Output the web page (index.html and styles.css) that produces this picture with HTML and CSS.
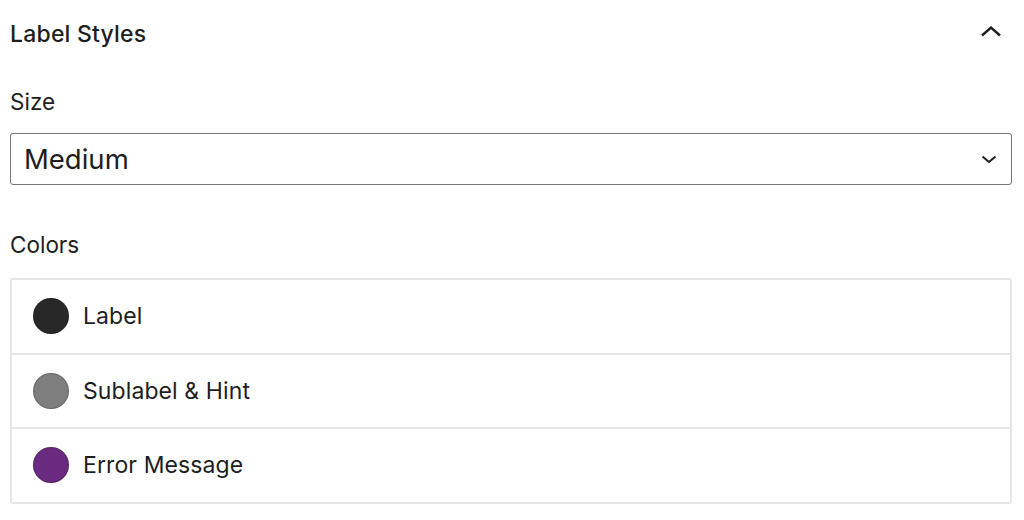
FILE: index.html
```html
<!DOCTYPE html>
<html>
<head>
<meta charset="utf-8">
<link rel="stylesheet" href="styles.css">
</head>
<body>
<div class="panel">
  <div class="panel-header">
    <h2 class="panel-title">Label Styles</h2>
    <svg class="toggle-icon" width="24" height="24" viewBox="0 0 24 24"><path d="M3 16.5 L12 8.5 L21 16.5" fill="none" stroke="#1e1e1e" stroke-width="2.4"/></svg>
  </div>
  <div class="field">
    <label class="field-label">Size</label>
    <div class="select">
      <span class="select-value">Medium</span>
      <svg class="select-arrow" width="18" height="12" viewBox="0 0 18 12"><path d="M2.5 3.5 L9 9 L15.5 3.5" fill="none" stroke="#1e1e1e" stroke-width="2"/></svg>
    </div>
  </div>
  <div class="field colors">
    <div class="field-label">Colors</div>
    <ul class="color-list">
      <li class="color-row"><span class="swatch swatch-label"></span><span class="color-name">Label</span></li>
      <li class="color-row"><span class="swatch swatch-sub"></span><span class="color-name">Sublabel &amp; Hint</span></li>
      <li class="color-row"><span class="swatch swatch-error"></span><span class="color-name">Error Message</span></li>
    </ul>
  </div>
</div>
</body>
</html>
```

FILE: styles.css
```css
html, body {
  margin: 0;
  padding: 0;
  background: #ffffff;
}
body {
  font-family: Inter, "Liberation Sans", sans-serif;
  color: #1e1e1e;
}
.panel {
  width: 1002px;
  margin-left: 10px;
}
.panel-header {
  display: flex;
  align-items: center;
  justify-content: space-between;
  height: 66px;
}
.panel-title {
  margin: 0;
  font-size: 23px;
  font-weight: 500;
  letter-spacing: 0.2px;
  line-height: 1;
  padding-top: 2px;
}
.toggle-icon {
  margin-right: 9px;
  margin-top: -4px;
}
.field {
  display: flex;
  flex-direction: column;
}
.field-label {
  font-size: 22.5px;
  line-height: 26px;
  margin-top: 23px;
  margin-bottom: 18px;
}
.select {
  height: 52px;
  box-sizing: border-box;
  border: 1.5px solid #767676;
  border-radius: 3px;
  display: flex;
  align-items: center;
  justify-content: space-between;
  padding: 0 13px 0 13px;
}
.select-value {
  font-size: 27.5px;
}
.colors .field-label {
  margin-top: 47px;
  margin-bottom: 20px;
}
.color-list {
  list-style: none;
  margin: 0;
  padding: 0;
  border: 2px solid #e6e6e6;
  border-radius: 3px;
}
.color-row {
  display: flex;
  align-items: center;
  height: 72.5px;
  padding-left: 21px;
  border-top: 2px solid #e6e6e6;
}
.color-row:first-child {
  border-top: none;
}
.swatch {
  width: 36px;
  height: 36px;
  border-radius: 50%;
  margin-right: 14px;
  box-sizing: border-box;
  border: 1px solid rgba(0,0,0,0.2);
}
.swatch-label { background: #282828; }
.swatch-sub { background: #7e7e7e; }
.swatch-error { background: #6a2a80; }
.color-name {
  font-size: 23px;
  letter-spacing: 0.1px;
}
```
